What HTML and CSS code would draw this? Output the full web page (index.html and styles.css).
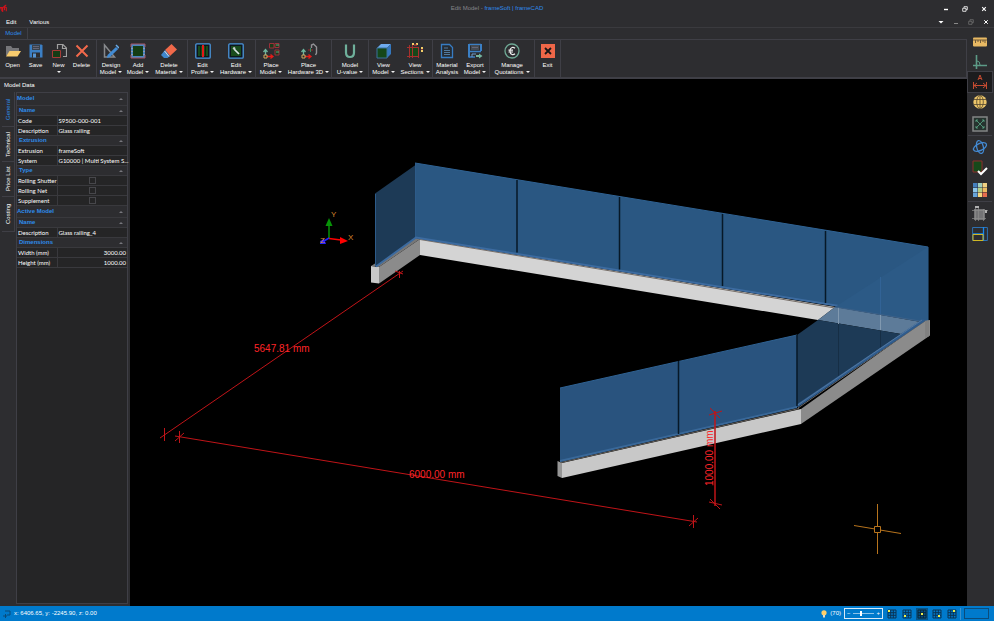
FILE: index.html
```html
<!DOCTYPE html>
<html lang="en">
<head>
<meta charset="utf-8">
<title>Edit Model - frameSoft | frameCAD</title>
<link rel="stylesheet" href="styles.css">
</head>
<body>
<header class="titlebar">
  <svg class="app-logo" viewBox="0 0 10 10"><path d="M0 6V4l2 0v4M3 9V4l2-1 2 1v4M5 4v3M4 3l3-2" fill="none" stroke="#d0121b" stroke-width="1.2"/></svg>
  <h1 class="title">Edit Model - <span>frameSoft | frameCAD</span></h1>
  <div class="window-buttons">
    <button aria-label="Minimize"><svg viewBox="0 0 6 6"><path d="M1 3.500h4" stroke="#fff" stroke-width="1.400"/></svg></button>
    <button aria-label="Restore"><svg viewBox="0 0 6 6"><path d="M2 2V.7h3.300v3H4M.7 2.300H4v3H.7z" fill="none" stroke="#fff" stroke-width=".8"/></svg></button>
    <button aria-label="Close"><svg viewBox="0 0 6 6"><path d="M1.200 1.200l3.600 3.600M4.800 1.200L1.200 4.800" stroke="#fff" stroke-width="1.100"/></svg></button>
  </div>
</header>
<nav class="menubar">
  <button>Edit</button>
  <button>Various</button>
  <div class="child-buttons">
    <button aria-label="Options"><svg viewBox="0 0 6 6"><path d="M.5 2h5L3 4.500z" fill="#fff"/></svg></button>
    <button aria-label="Minimize model"><svg viewBox="0 0 6 6"><path d="M1 4.500h4" stroke="#888" stroke-width="1"/></svg></button>
    <button aria-label="Restore model"><svg viewBox="0 0 6 6"><path d="M2 2V.7h3.300v3H4M.7 2.300H4v3H.7z" fill="none" stroke="#777" stroke-width=".7"/></svg></button>
    <button aria-label="Close model"><svg viewBox="0 0 6 6"><path d="M1.200 1.200l3.600 3.600M4.800 1.200L1.200 4.800" stroke="#fff" stroke-width="1"/></svg></button>
  </div>
</nav>
<div class="workspace">
  <div class="content">
    <div class="ribbon-tabs"><button class="ribbon-tab">Model</button></div>
    <div class="ribbon">
      <div class="group file">
        <button><svg viewBox="0 0 16 16"><path d="M1 13V3h5l1.500 2H14v4H5z" fill="#77777a"/><path d="M1 13.500L4.500 8H16l-3.500 5.500z" fill="#f7cb6e"/></svg>Open</button>
        <button><svg viewBox="0 0 16 16"><path d="M1.500 1.500h12l1 1v12h-13z" fill="#3b7fc4"/><path d="M4 2h8v5H4z" fill="#39424c"/><path d="M5 3.500h6M5 5.500h6" stroke="#667"/><path d="M4 9.500h8v5H4z" fill="#2d2d30"/><path d="M5 10.500h3v4H5z" fill="#5795d2"/></svg>Save</button>
        <button><svg viewBox="0 0 16 16"><path d="M6.500 6V1.500H12L15.500 5v8.500H12M11.500 2v3.500H15" fill="none" stroke="#a0a0a0" stroke-width="1.200"/><path d="M1.500 7.500h8v7h-8z" fill="#153c15" stroke="#a63a36"/></svg><span>New<br><i></i></span></button>
        <button><svg viewBox="0 0 16 16"><path d="M2.500 2.500l11 11M13.500 2.500l-11 11" stroke="#f2694b" stroke-width="2"/></svg>Delete</button>
      </div>
      <div class="group design">
        <button><svg viewBox="0 0 16 16"><path d="M1.500 2v12h10z" fill="none" stroke="#87898c" stroke-width="1.500"/><path d="M4.500 12L13 4l2.200 2L7 14l-3 1z" fill="#418bd4"/><path d="M13 2l3 3" stroke="#69abe8" stroke-width="1.500"/></svg><span>Design<br>Model<i></i></span></button>
        <button><svg viewBox="0 0 16 16"><path d="M2 2h12v12H2z" fill="#153c15" stroke="#4a86bf" stroke-width="2"/><path d="M1 4V1h14v3M1 12v3h14v-3" fill="none" stroke="#a65462"/><path d="M2 5v1m0 2v1m0 2v1M14 5v1m0 2v1m0 2v1" stroke="#d2a6a8"/></svg><span>Add<br>Model<i></i></span></button>
        <button><svg viewBox="0 0 16 16"><path d="M10.500 1L16 6.500 9 13 4 7z" fill="#f0694a"/><path d="M4 7l5 6-2.500 2H3L0 12z" fill="#3f87ce"/><path d="M3.500 8l4.500 5.500" stroke="#e6d8d5"/></svg><span>Delete<br>Material<i></i></span></button>
      </div>
      <div class="group profile">
        <button><svg viewBox="0 0 16 16"><rect x=".8" y=".8" width="14.400" height="14.400" rx="1" fill="#0d151d" stroke="#4b96dc" stroke-width="1.300"/><path d="M3 3h10v10H3z" fill="#194b1c"/><path d="M8 2v12" stroke="#e51818" stroke-width="2"/><path d="M5.500 3v10M10.500 3v10" stroke="#0d260e"/></svg><span>Edit<br>Profile<i></i></span></button>
        <button><svg viewBox="0 0 16 16"><rect x=".8" y=".8" width="14.400" height="14.400" rx="1" fill="#0d151d" stroke="#4b96dc" stroke-width="1.300"/><path d="M3 3h10v10H3z" fill="#194b1c"/><path d="M6 6l5 5" stroke="#d8e3e4" stroke-width="1.700"/><path d="M4.500 5.500L7 7l.5-2L6 3.700" fill="#c8d2d2"/></svg><span>Edit<br>Hardware<i></i></span></button>
      </div>
      <div class="group place">
        <button><svg class="wide" viewBox="0 0 18 16"><path d="M3.500 13V7M1.500 9l2-2.500 2 2.500" stroke="#6db59d" stroke-width="1.300" fill="none"/><path d="M4 13.500h6M8.500 11.500l2.500 2-2.500 2" stroke="#e51b18" stroke-width="1.300" fill="none"/><path d="M2 12h3v3H2z" fill="#272727" stroke="#d4a85e"/><path d="M7.500.5h4.500v4.500H7.500zM13 .5h4v4h-4zM13 7h4v5h-4z" fill="#193b19" stroke="#9c3039"/><path d="M14 2h3M14 9h3" stroke="#54ad80"/></svg><span>Place<br>Model<i></i></span></button>
        <button><svg class="wide" viewBox="0 0 18 16"><path d="M3.500 13V7M1.500 9l2-2.500 2 2.500" stroke="#6db59d" stroke-width="1.300" fill="none"/><path d="M4 13.500h6M8.500 11.500l2.500 2-2.500 2" stroke="#e51b18" stroke-width="1.300" fill="none"/><path d="M2 12h3v3H2z" fill="#272727" stroke="#d4a85e"/><path d="M11.500 5V2l2-1 3 3v6l-1 2" fill="none" stroke="#929295" stroke-width="1.400"/><path d="M8 7h5" stroke="#9b2b2b"/><path d="M10.500 5v4" stroke="#368d63"/></svg><span>Place<br>Hardware 3D<i></i></span></button>
      </div>
      <div class="group uvalue">
        <button><svg viewBox="0 0 16 16"><path d="M4 1.500v8Q4 14 8 14t4-4.500v-8" fill="none" stroke="#6fb09b" stroke-width="2.200"/></svg><span>Model<br>U-value<i></i></span></button>
      </div>
      <div class="group view">
        <button><svg viewBox="0 0 16 16"><path d="M1 5l4-4h10l-4 4z" fill="#6facef"/><path d="M11 5l4-4v10l-4 4z" fill="#3477be"/><path d="M1 5h10v10H1z" fill="#154719" stroke="#3a739c"/></svg><span>View<br>Model<i></i></span></button>
        <button><svg viewBox="0 0 16 16"><path d="M2 4h10v10H2z" fill="#164719"/><path d="M0 4.500h12M0 13.500h12M2.500 2v13M11.500 4v11M5.500 1v14" stroke="#a8302d"/><path d="M5 1h2M9 1h2M14 5h2M14 8h2" stroke="#f4ce68" stroke-width="2"/><path d="M7 2h3M15 6v1" stroke="#dc433b"/></svg><span>View<br>Sections<i></i></span></button>
      </div>
      <div class="group export">
        <button><svg viewBox="0 0 16 16"><path d="M2.500 1.500h8l3 3v10h-11z" fill="#252b32" stroke="#377cc3" stroke-width="1.300"/><path d="M5 5h4M5 7.500h6M5 9.500h6M5 11.500h6" stroke="#527a9f"/></svg><span>Material<br>Analysis</span></button>
        <button><svg viewBox="0 0 16 16"><path d="M2 1v13.500M14 1v7" stroke="#3b7fc4" stroke-width="2"/><path d="M2 1.500h12M2 8.500h12M2 14h6" stroke="#3b7fc4" stroke-width="1.300"/><path d="M4 2h8v5H4z" fill="#444b53"/><path d="M5 4.500h6" stroke="#667"/><path d="M5 14v-3h4" fill="none" stroke="#6e9dcb"/><path d="M9 12h3v-1.500l3.500 2.500-3.500 2.500V14H9z" fill="#74b39e"/></svg><span>Export<br>Model<i></i></span></button>
      </div>
      <div class="group manage">
        <button><svg viewBox="0 0 16 16"><circle cx="8" cy="8" r="7" fill="none" stroke="#6fa995" stroke-width="1.300"/><path d="M11 5.200Q9.500 4 8 4.500 6 5.200 6 8t2 3.500q1.500.5 3-.7M4.500 7.200h4.500M4.500 9h4.500" fill="none" stroke="#eee" stroke-width="1.200"/></svg><span>Manage<br>Quotations<i></i></span></button>
      </div>
      <div class="group exit">
        <button><svg viewBox="0 0 16 16"><path d="M1 1h14v14H1z" fill="#ef6748"/><path d="M5 5l6 6M11 5l-6 6" stroke="#171717" stroke-width="1.800"/></svg>Exit</button>
      </div>
    </div>
    <div class="body">
      <aside class="panel">
        <h2>Model Data</h2>
        <div class="panel-body">
          <div class="side-tabs">
            <button class="active">General</button>
            <button>Technical</button>
            <button>Price List</button>
            <button>Costing</button>
          </div>
          <div class="sheet">
            <table>
              <colgroup><col class="names"><col></colgroup>
              <tr class="section"><th colspan="2">Model<b></b></th></tr>
              <tr class="sub"><th colspan="2">Name<b></b></th></tr>
              <tr><td>Code</td><td>S9500-000-001</td></tr>
              <tr><td>Description</td><td>Glass railing</td></tr>
              <tr class="sub"><th colspan="2">Extrusion<b></b></th></tr>
              <tr><td>Extrusion</td><td>frameSoft</td></tr>
              <tr><td>System</td><td>G10000 | Multi System S...</td></tr>
              <tr class="sub"><th colspan="2">Type<b></b></th></tr>
              <tr><td><label for="shutter">Rolling Shutter</label></td><td class="check"><input type="checkbox" id="shutter"></td></tr>
              <tr><td><label for="net">Rolling Net</label></td><td class="check"><input type="checkbox" id="net"></td></tr>
              <tr><td><label for="supplement">Supplement</label></td><td class="check"><input type="checkbox" id="supplement"></td></tr>
              <tr class="section"><th colspan="2">Active Model<b></b></th></tr>
              <tr class="sub"><th colspan="2">Name<b></b></th></tr>
              <tr><td>Description</td><td>Glass railing_4</td></tr>
              <tr class="sub"><th colspan="2">Dimensions<b></b></th></tr>
              <tr><td>Width (mm)</td><td class="number">3000.00</td></tr>
              <tr><td>Height (mm)</td><td class="number">1000.00</td></tr>
            </table>
          </div>
        </div>
      </aside>
      <main class="viewport">
        <svg viewBox="130 79 837 527">
          <!-- back run -->
          <path d="M420 239L835 307 818 320 420 255z" fill="#d4d4d4"/>
          <path d="M379 267L420 239V255L379 283.500z" fill="#8b8b8b"/>
          <path d="M371 266L379 267V283.500L371 282.500z" fill="#c8c8c8"/>
          <path d="M371 266l8 1 41-28-4-1z" fill="#777"/>
          <path d="M375 193.500L415.500 165V237.500L375 267z" fill="#1d3a56"/>
          <path d="M415 163L928 247V321L415 238z" fill="#2a5782"/>
          <path d="M415 163L928 247V321" fill="none" stroke="#2f6293"/>
          <path d="M415.500 163V237M375.500 194V266" stroke="#2d5b89"/>
          <path d="M420 239.500L835 308" stroke="#746c66"/>
          <path d="M376 266.500L416 237.500 928 320.500" fill="none" stroke="#3c6ba0" stroke-width="2"/>
          <path d="M517 180v72.500M619.500 197v72.500M722.500 214v72M825.500 231v72" stroke="#071827" stroke-width="1.500"/>
          <!-- right run -->
          <path d="M835 307L928 247V321L921 322z" fill="#2c5a86"/>
          <path d="M835 307L921 322 901 334 818 320z" fill="#5d7b99"/>
          <path d="M797 335L818 320 901 334 797 407z" fill="#1d3a56"/>
          <path d="M838.500 307v17M880.500 314v16" stroke="#8199b0"/>
          <path d="M838.500 324v52M880.500 331v18" stroke="#162e45"/>
          <path d="M880.500 277v37" stroke="#326396"/>
          <path d="M835 307L926 322" stroke="#3d628a"/>
          <path d="M801 409L924 321 930 320V335.500L801 424z" fill="#8b8b8b"/>
          <path d="M926 321v17M928 320v17" stroke="#777"/>
          <path d="M798 408L925 321" stroke="#68645f"/>
          <path d="M797 406L924 320" stroke="#2f5c8e" stroke-width="3"/>
          <path d="M797 405.500L922 320" stroke="#52779f"/>
          <!-- front run -->
          <path d="M562 463L801 409V424L562 478z" fill="#c8c8c8"/>
          <path d="M557.500 461L562 463V478L557.500 476z" fill="#969696"/>
          <path d="M560 388L797 335V407L560 462z" fill="#29537e"/>
          <path d="M560 388L797 335" stroke="#2f6293"/>
          <path d="M561 462.500L799 408.500" stroke="#68645f"/>
          <path d="M560 461L797 407" stroke="#396899" stroke-width="2"/>
          <path d="M678.500 361v73M797 335v71" stroke="#071827" stroke-width="1.500"/>
          <!-- dimensions -->
          <g stroke="#c01418" fill="none">
            <path d="M160 438L403 271M164.500 428v13M399.500 271v7M395 271l8 3"/>
            <path d="M175 436L697 522M179.500 431v12M175 441l9-8M693.500 515v13M689 526l9-8"/>
            <path d="M715 411v95" stroke-width="1.500"/>
            <path d="M709 415l13-4M710 408l10 10M709 502l13 3M710 499l10 10"/>
          </g>
          <g class="dims">
            <text x="254" y="352">5647.81 mm</text>
            <text x="409" y="478">6000.00 mm</text>
            <text transform="translate(713 486) rotate(-90)">1000.00 mm</text>
          </g>
          <!-- axes -->
          <path d="M329 238V225" stroke="#079307" stroke-width="1.500"/><path d="M325.500 226L329 218l3.500 8z" fill="#079307"/>
          <path d="M329 238.500l12 1.500" stroke="#f00" stroke-width="1.500"/><path d="M340 237l8 4-8 3z" fill="#f00"/>
          <path d="M329 238l-5 3" stroke="#22f" stroke-width="1.500"/><path d="M320 241l4-2 2 5h-6z" fill="#22f"/>
          <g class="axes"><text x="331" y="217">Y</text><text x="348" y="240">X</text><text x="320" y="243">Z</text></g>
          <!-- cursor -->
          <path d="M854 525.500L875 529M880 530l21 3.500M877.500 504v23M877.500 532v22M874.500 526.500h6v6h-6z" stroke="#b8741d" fill="none"/>
        </svg>
      </main>
    </div>
  </div>
  <div class="tools">
    <button aria-label="Ruler"><svg viewBox="0 0 16 16"><rect x="1" y="3.500" width="14" height="9" rx="1" fill="#e8b963"/><path d="M1 6h14M3.500 6v3M6 6v2M8.500 6v3M11 6v2M13 6v3" stroke="#705b39"/></svg></button>
    <button aria-label="Perpendicular"><svg viewBox="0 0 16 16"><path d="M4.500 1v14M1 11.500h14" stroke="#5d9b87" stroke-width="1.600"/><path d="M5 7q3 0 3 4" stroke="#5d9b87" fill="none"/></svg></button>
    <button class="on" aria-label="Dimensions"><svg viewBox="0 0 16 16"><path d="M6 6l2-5 2 5M7 4.500h2M1.500 8v7M14.500 8v7M2 11.500h12M5 9l-3 2.500L5 14M11 9l3 2.500-3 2.500" fill="none" stroke="#c44b31"/></svg></button>
    <button aria-label="World"><svg viewBox="0 0 16 16"><circle cx="8" cy="8" r="6.700" fill="#edc66a"/><path d="M2 5.500h12M2 10.500h12M8 1.500v13" stroke="#54472d" stroke-width=".8"/><ellipse cx="8" cy="8" rx="3.300" ry="6.500" fill="none" stroke="#54472d" stroke-width=".8"/></svg></button>
    <button class="last" aria-label="Zoom extents"><svg viewBox="0 0 16 16"><rect x="1" y="1" width="14" height="14" fill="#26332f" stroke="#838585" stroke-width="1.500"/><path d="M4 6V4h2M10 4h2v2M12 10v2h-2M6 12H4v-2M4 4l8 8M12 4l-8 8" fill="none" stroke="#5baa88" stroke-width=".8"/></svg></button>
    <button class="orbit" aria-label="Orbit"><svg viewBox="0 0 16 16"><g fill="none" stroke="#438bd5" stroke-width="1.300"><ellipse cx="8" cy="8" rx="7" ry="3.500" transform="rotate(-25 8 8)"/><ellipse cx="8" cy="8" rx="3.300" ry="6.500" transform="rotate(-15 8 8)"/></g></svg></button>
    <button aria-label="Check model"><svg viewBox="0 0 16 16"><path d="M1 1h9v11H1z" fill="#16491a" stroke="#8c2e2b"/><path d="M6 11l3 3 6-6" fill="none" stroke="#fff" stroke-width="2"/></svg></button>
    <button class="last" aria-label="Colors"><svg viewBox="0 0 16 16"><path d="M1 1h4.500v4.500H1z" fill="#447fbd"/><path d="M6 1h4v4.500H6z" fill="#a1cfbd"/><path d="M10.500 1H15v4.500h-4.500z" fill="#f0d183"/><path d="M1 6h4.500v4H1z" fill="#8dc7eb"/><path d="M6 6h4v4H6z" fill="#b4cf83"/><path d="M10.500 6H15v4h-4.500z" fill="#edbc62"/><path d="M1 10.500h4.500V15H1z" fill="#67a4d9"/><path d="M6 10.500h4V15H6z" fill="#f4d57c"/><path d="M10.500 10.500H15V15h-4.500z" fill="#e66c4d"/></svg></button>
    <button class="box" aria-label="Sections"><svg viewBox="0 0 16 16"><path d="M2 4h11v11H2z" fill="#747476"/><path d="M0 5.500h16M0 13.500h14M3.500 2v14M6.500 2v14M11.500 4v12" stroke="#8c8c8c" stroke-width=".7"/><path d="M3 2h4M14 5v3" stroke="#b0b0b0" stroke-width="2"/></svg></button>
    <button aria-label="Layout"><svg viewBox="0 0 16 16"><path d="M.6 1.500h14.800v13H.6z" fill="none" stroke="#2d70b2"/><path d="M11.500 1v14M1 8h10" stroke="#1688ef" stroke-width="1.300"/><path d="M1 8.500h10v6H1z" fill="none" stroke="#d0b825"/></svg></button>
  </div>
</div>
<footer class="statusbar">
  <svg class="pin" viewBox="0 0 8 8"><path d="M2 1h5v4H4M0 6h4M2.500 4v4" fill="none" stroke="#084b7b"/></svg>
  <output>x: 6406.65, y: -2245.90, z: 0.00</output>
  <div class="status-right">
    <svg class="bulb" viewBox="0 0 6 8"><circle cx="3" cy="2.800" r="2.600" fill="#ffd06a"/><path d="M2 5h2v2.500H2z" fill="#e6dcc8"/></svg>
    <label for="zoom">(70)</label>
    <div class="slider"><button aria-label="Decrease">−</button><input type="range" id="zoom" min="0" max="100" value="36"><button aria-label="Increase">+</button></div>
    <div class="layouts">
      <button aria-label="Top left"><svg viewBox="0 0 10 10"><path d="M1 1h8v8H1zM1 3.700h8M1 6.300h8M3.700 1v8M6.300 1v8" fill="none" stroke="#0b3454"/><path d="M1 1h2v2H1z" fill="#eff04b"/></svg></button>
      <button aria-label="Bottom"><svg viewBox="0 0 10 10"><path d="M1 1h8v8H1zM1 3.700h8M1 6.300h8M3.700 1v8M6.300 1v8" fill="none" stroke="#0b3454"/><path d="M2 6h2v2H2z" fill="#eff04b"/></svg></button>
      <button class="on" aria-label="Center"><svg viewBox="0 0 10 10"><path d="M1 1h8v8H1zM1 3.700h8M1 6.300h8M3.700 1v8M6.300 1v8" fill="none" stroke="#0b2639"/><path d="M4 4h2v2H4z" fill="#eff04b"/></svg></button>
      <button aria-label="Bottom right"><svg viewBox="0 0 10 10"><path d="M1 1h8v8H1zM1 3.700h8M1 6.300h8M3.700 1v8M6.300 1v8" fill="none" stroke="#0b3454"/><path d="M6 6h2v2H6z" fill="#eff04b"/></svg></button>
      <button aria-label="Top right"><svg viewBox="0 0 10 10"><path d="M1 1h8v8H1zM1 3.700h8M1 6.300h8M3.700 1v8M6.300 1v8" fill="none" stroke="#0b3454"/><path d="M6 1h2v2H6z" fill="#eff04b"/></svg></button>
    </div>
    <div class="progress"></div>
  </div>
</footer>
</body>
</html>
```
FILE: styles.css
```css
* { box-sizing: border-box; }
body {
  margin: 0;
  height: 100vh;
  display: flex;
  flex-direction: column;
  overflow: hidden;
  background: #2d2d30;
  color: #fff;
  font: 6px/7px "Liberation Sans", sans-serif;
}
button {
  margin: 0;
  padding: 0;
  border: 0;
  background: none;
  color: inherit;
  font: inherit;
}
svg { display: block; }

.titlebar {
  display: grid;
  grid-template-columns: 60px 1fr 60px;
  align-items: center;
  height: 17px;
}
.app-logo { width: 9px; height: 9px; }
.title {
  margin: 0;
  font-size: 6px;
  font-weight: 400;
  text-align: center;
  color: #85858a;
}
.title span { color: #2d8ceb; }
.window-buttons { display: flex; justify-content: flex-end; gap: 13px; padding-right: 7px; }
.window-buttons svg, .child-buttons svg { width: 6px; height: 6px; }

.menubar {
  display: flex;
  align-items: center;
  gap: 13px;
  height: 11px;
  padding: 0 5px 0 6px;
  border-bottom: 1px solid #3a3a3e;
}
.child-buttons { display: flex; gap: 9px; margin-left: auto; }

.workspace { flex: 1; min-height: 0; display: flex; }
.content { flex: 1; min-width: 0; display: flex; flex-direction: column; }
.ribbon-tabs { display: flex; height: 11px; }
.ribbon-tab {
  width: 28px;
  border-right: 1px solid #3f3f46;
  color: #2d8ceb;
}
.ribbon {
  display: flex;
  height: 40px;
  border: 1px solid #3f3f46;
  border-width: 1px 1px 2px 0;
}
.group {
  display: grid;
  border-right: 1px solid #3f3f46;
}
.group button {
  display: flex;
  flex-direction: column;
  align-items: center;
  gap: 3px;
  padding-top: 3px;
  white-space: nowrap;
}
.group svg { width: 16px; height: 16px; }
.group svg.wide { width: 18px; }
.group i {
  display: inline-block;
  margin-left: 2px;
  vertical-align: 1px;
  border: 2px solid transparent;
  border-top-color: #f1f1f1;
  border-bottom: 0;
}
.file { padding-left: 1px; grid-template-columns: repeat(4, 23px); padding-right: 3px; }
.design { grid-template-columns: 28px 26px 36px; }
.profile { grid-template-columns: 29px 38px; }
.place { grid-template-columns: 30px 45px; }
.uvalue { grid-template-columns: 36px; }
.view { grid-template-columns: 29px 34px; }
.export { grid-template-columns: 28px 28px; }
.manage { grid-template-columns: 44px; }
.exit { grid-template-columns: 25px; }

.body { flex: 1; min-height: 0; display: flex; }
.panel {
  flex: none;
  width: 130px;
  display: flex;
  flex-direction: column;
  padding: 0 2px 2px;
}
.panel h2 {
  margin: 0;
  padding: 3px 2px;
  height: 13px;
  font-size: 6px;
  font-weight: 400;
}
.panel-body { flex: 1; min-height: 0; display: flex; }
.side-tabs { width: 14px; }
.side-tabs button {
  display: block;
  width: 13px;
  height: 35px;
  border: 1px solid #3f3f46;
  border-width: 1px 0 0 1px;
  writing-mode: vertical-rl;
  transform: rotate(180deg);
}
.side-tabs .active { color: #2d8ceb; }
.sheet {
  flex: 1;
  min-width: 0;
  background: #252526;
  border: 1px solid #3f3f46;
}
table {
  width: 100%;
  table-layout: fixed;
  border-collapse: collapse;
}
.names { width: 40px; }
tr { height: 10px; }
td, th {
  height: 10px;
  padding: 0 0 0 2px;
  border-bottom: 1px solid #39393d;
  white-space: nowrap;
  text-align: left;
}
td { padding-left: 1px; font-family: Lato, "Liberation Sans", sans-serif; }
td:first-child { border-right: 1px solid #39393d; }
th { background: #2d2d30; color: #2d8ceb; }
.section th { height: 12px; padding-left: 0; }
th b {
  float: right;
  margin: 3px 4px 0 0;
  border: 2px solid transparent;
  border-bottom-color: #77777c;
  border-top: 0;
}
td.number { padding-right: 1px; text-align: right; }
.check input {
  appearance: none;
  display: block;
  width: 7px;
  height: 7px;
  margin: 0 auto;
  border: 1px solid #47474b;
}

.viewport { flex: 1; min-width: 0; background: #000; }
.viewport svg { width: 100%; height: 100%; }
.dims { fill: #ff2428; font-size: 10px; }
.axes { fill: #d8842c; font-size: 8px; }

.tools {
  flex: none;
  width: 27px;
  padding: 4px 1px 0;
}
.tools button {
  display: flex;
  align-items: center;
  justify-content: center;
  width: 24px;
  height: 20px;
}
.tools svg { width: 16px; height: 16px; }
.tools .on { background: #1c1c1e; outline: 1px solid #3f3f46; }
.tools .last { height: 23px; }
.tools .orbit, .tools .box { height: 23px; border-top: 1px solid #3f3f46; }

.statusbar {
  display: flex;
  align-items: center;
  gap: 3px;
  height: 15px;
  padding: 0 5px 0 3px;
  background: #007acc;
  color: #fff;
}
.pin { width: 8px; height: 8px; }
.status-right { margin-left: auto; display: flex; align-items: center; gap: 3px; }
.bulb { width: 6px; height: 8px; }
.slider {
  display: flex;
  align-items: center;
  width: 39px;
  height: 11px;
  padding: 0 2px;
  border: 1px solid #d8eaf7;
}
.slider input {
  appearance: none;
  flex: 1;
  min-width: 0;
  height: 1px;
  margin: 0 2px;
  background: #8cc3e9;
}
.slider input::-webkit-slider-thumb {
  appearance: none;
  width: 2px;
  height: 5px;
  background: #fff;
}
.layouts {
  display: flex;
  gap: 3px;
  padding-right: 2px;
  border-right: 1px solid #3b91ce;
}
.layouts button { padding: 1px; }
.layouts .on { background: #075487; }
.layouts svg { width: 10px; height: 10px; }
.progress { width: 25px; height: 11px; border: 1px solid #0b4c7b; }
```
